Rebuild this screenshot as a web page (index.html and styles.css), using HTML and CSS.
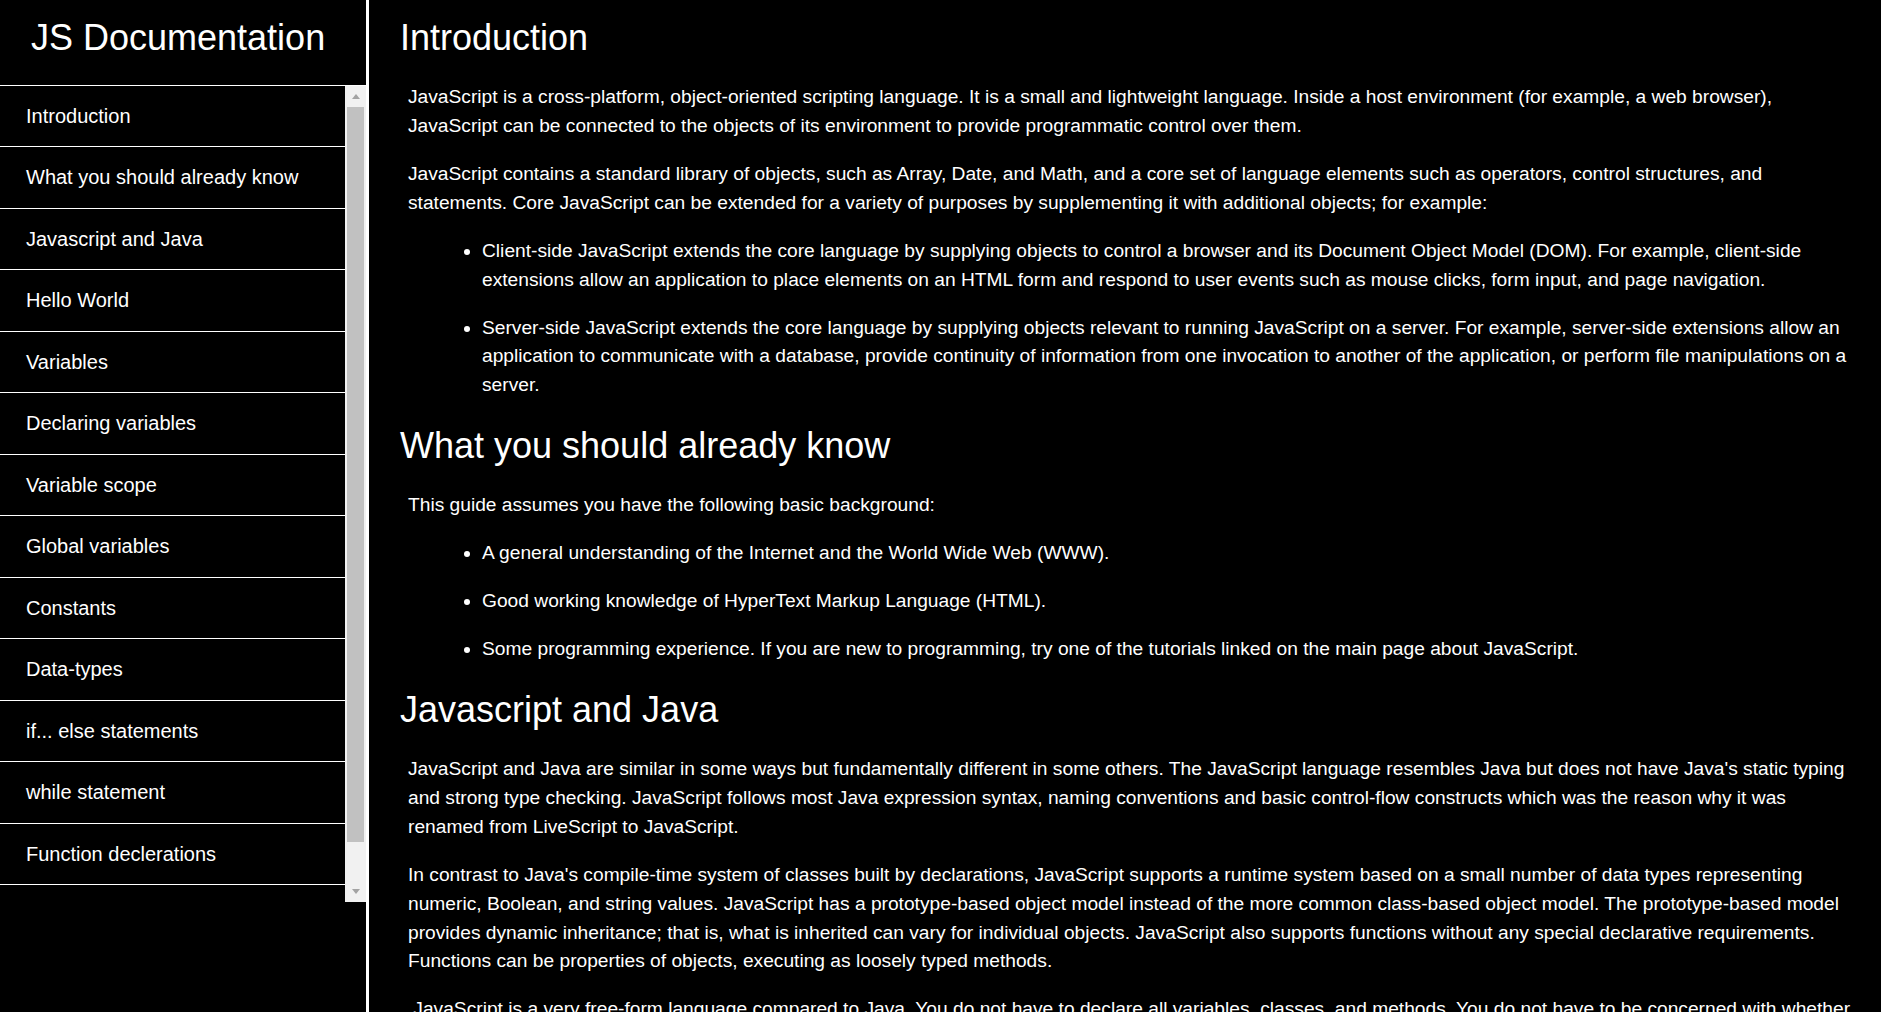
FILE: index.html
```html
<!DOCTYPE html>
<html lang="en">
<head>
<meta charset="utf-8">
<title>JS Documentation</title>
<link rel="stylesheet" href="styles.css">
</head>
<body>
<nav class="sidebar" id="navbar">
  <header class="sidebar-header">JS Documentation</header>
  <div class="nav-body">
    <ul class="nav-list">
      <li><a class="nav-link" href="#Introduction">Introduction</a></li>
      <li><a class="nav-link" href="#What_you_should_already_know">What you should already know</a></li>
      <li><a class="nav-link" href="#Javascript_and_Java">Javascript and Java</a></li>
      <li><a class="nav-link" href="#Hello_World">Hello World</a></li>
      <li><a class="nav-link" href="#Variables">Variables</a></li>
      <li><a class="nav-link" href="#Declaring_variables">Declaring variables</a></li>
      <li><a class="nav-link" href="#Variable_scope">Variable scope</a></li>
      <li><a class="nav-link" href="#Global_variables">Global variables</a></li>
      <li><a class="nav-link" href="#Constants">Constants</a></li>
      <li><a class="nav-link" href="#Data-types">Data-types</a></li>
      <li><a class="nav-link" href="#if_else_statements">if... else statements</a></li>
      <li><a class="nav-link" href="#while_statement">while statement</a></li>
      <li><a class="nav-link" href="#Function_declerations">Function declerations</a></li>
      <li><a class="nav-link" href="#Reference">Reference</a></li>
    </ul>
    <div class="scrollbar" aria-hidden="true">
      <div class="sb-btn"><span class="arrow-up"></span></div>
      <div class="sb-track"><div class="sb-thumb"></div></div>
      <div class="sb-btn"><span class="arrow-down"></span></div>
    </div>
  </div>
</nav>
<main class="main-doc" id="main-doc">
  <section class="main-section" id="Introduction">
    <h2 class="section-title">Introduction</h2>
    <p>JavaScript is a cross-platform, object-oriented scripting language. It is a small and lightweight language. Inside a host environment (for example, a web browser), JavaScript can be connected to the objects of its environment to provide programmatic control over them.</p>
    <p>JavaScript contains a standard library of objects, such as Array, Date, and Math, and a core set of language elements such as operators, control structures, and statements. Core JavaScript can be extended for a variety of purposes by supplementing it with additional objects; for example:</p>
    <ul>
      <li>Client-side JavaScript extends the core language by supplying objects to control a browser and its Document Object Model (DOM). For example, client-side extensions allow an application to place elements on an HTML form and respond to user events such as mouse clicks, form input, and page navigation.</li>
      <li>Server-side JavaScript extends the core language by supplying objects relevant to running JavaScript on a server. For example, server-side extensions allow an application to communicate with a database, provide continuity of information from one invocation to another of the application, or perform file manipulations on a server.</li>
    </ul>
  </section>
  <section class="main-section" id="What_you_should_already_know">
    <h2 class="section-title">What you should already know</h2>
    <p>This guide assumes you have the following basic background:</p>
    <ul>
      <li>A general understanding of the Internet and the World Wide Web (WWW).</li>
      <li>Good working knowledge of HyperText Markup Language (HTML).</li>
      <li>Some programming experience. If you are new to programming, try one of the tutorials linked on the main page about JavaScript.</li>
    </ul>
  </section>
  <section class="main-section" id="Javascript_and_Java">
    <h2 class="section-title">Javascript and Java</h2>
    <p>JavaScript and Java are similar in some ways but fundamentally different in some others. The JavaScript language resembles Java but does not have Java's static typing and strong type checking. JavaScript follows most Java expression syntax, naming conventions and basic control-flow constructs which was the reason why it was renamed from LiveScript to JavaScript.</p>
    <p>In contrast to Java's compile-time system of classes built by declarations, JavaScript supports a runtime system based on a small number of data types representing numeric, Boolean, and string values. JavaScript has a prototype-based object model instead of the more common class-based object model. The prototype-based model provides dynamic inheritance; that is, what is inherited can vary for individual objects. JavaScript also supports functions without any special declarative requirements. Functions can be properties of objects, executing as loosely typed methods.</p>
    <p>&nbsp;JavaScript is a very free-form language compared to Java. You do not have to declare all variables, classes, and methods. You do not have to be concerned with whether methods are public, private, or protected, and you do not have to implement interfaces. Variables, parameters, and function return types are not explicitly typed.</p>
  </section>
  <section class="main-section" id="Hello_World">
    <h2 class="section-title">Hello World</h2>
    <p>To get started with writing JavaScript, open the Scratchpad and write your first "Hello world" JavaScript code.</p>
  </section>
  <section class="main-section" id="Variables">
    <h2 class="section-title">Variables</h2>
    <p>You use variables as symbolic names for values in your application. The names of variables, called identifiers, conform to certain rules.</p>
  </section>
</main>
</body>
</html>
```

FILE: styles.css
```css
html,
body {
  margin: 0;
  height: 100%;
  background: #000;
  color: #fff;
  font-family: "Liberation Sans", Arial, sans-serif;
}

body {
  display: flex;
  overflow: hidden;
}

/* ---------- sidebar ---------- */
.sidebar {
  flex: none;
  width: 366px;
  height: 100vh;
  border-right: 3px solid #fff;
  display: flex;
  flex-direction: column;
}

.sidebar-header {
  font-size: 36px;
  line-height: 40.8px;
  padding: 17.8px 0 26.4px 31px;
  border-bottom: 1px solid #fff;
}

.nav-body {
  display: flex;
  height: 816px;
}

.nav-list {
  flex: 1;
  list-style: none;
  margin: 0;
  padding: 0;
  overflow: hidden;
}

.nav-link {
  display: block;
  font-size: 20px;
  line-height: 23px;
  padding: 18.75px 0 18.75px 26px;
  color: #fff;
  text-decoration: none;
  border-bottom: 1px solid #fff;
}

.scrollbar {
  flex: none;
  width: 21px;
  background: #f1f1f1;
  display: flex;
  flex-direction: column;
}

.sb-btn {
  height: 21px;
  flex: none;
  display: flex;
  align-items: center;
  justify-content: center;
}

.arrow-up,
.arrow-down {
  width: 0;
  height: 0;
  border-left: 4px solid transparent;
  border-right: 4px solid transparent;
}

.arrow-up {
  border-bottom: 5px solid #a3a3a3;
}

.arrow-down {
  border-top: 5px solid #a3a3a3;
}

.sb-track {
  flex: 1;
  padding: 0 2px;
}

.sb-thumb {
  height: 735px;
  background: #c1c1c1;
}

/* ---------- main ---------- */
.main-doc {
  flex: 1;
  height: 100vh;
  box-sizing: border-box;
  padding: 18px 25px 0 31px;
  overflow-y: auto;
  scrollbar-width: none;
}

.main-doc::-webkit-scrollbar {
  display: none;
}

.main-section + .main-section {
  margin-top: 26px;
}

.section-title {
  font-size: 36px;
  font-weight: normal;
  line-height: 40.8px;
  margin: 0 0 24.5px;
}

.main-section p,
.main-section ul {
  font-size: 19.2px;
  line-height: 28.8px;
  margin: 19.2px 0 19.2px 8px;
}

.main-section ul {
  padding-left: 74px;
}

.main-section li {
  margin: 19.2px 0;
}
```
